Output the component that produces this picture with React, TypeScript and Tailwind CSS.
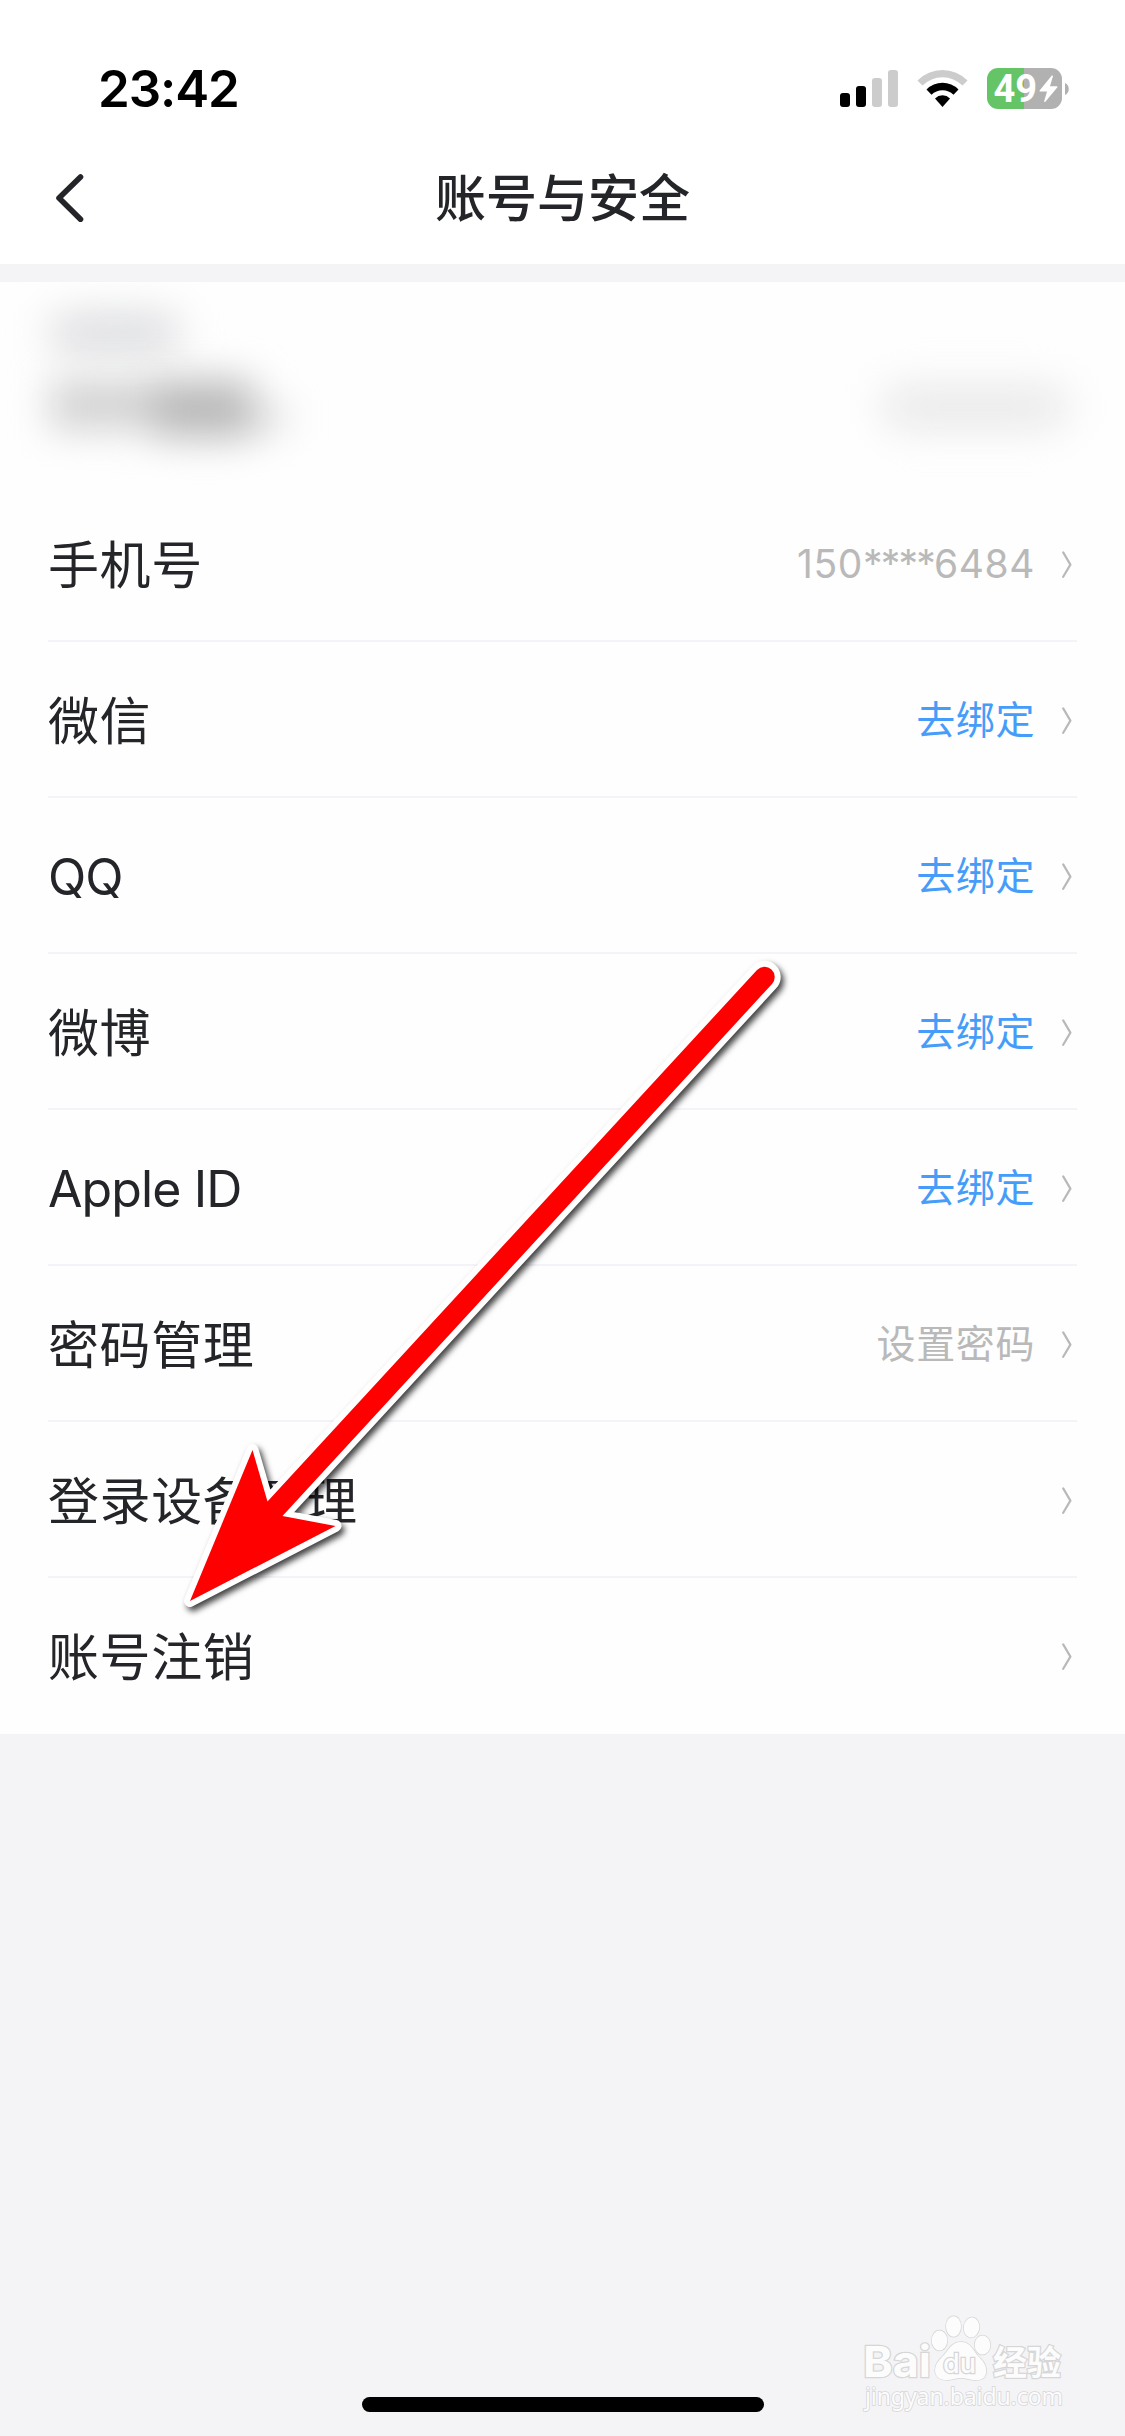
import type { ReactNode } from "react";

type Row = {
  label: string;
  value?: ReactNode;
  link?: boolean;
};

const rows: Row[] = [
  {
    label: "手机号",
    value: (
      <>
        150<span className="tracking-[-1.8px]">****</span>6484
      </>
    ),
  },
  { label: "微信", value: "去绑定", link: true },
  { label: "QQ", value: "去绑定", link: true },
  { label: "微博", value: "去绑定", link: true },
  { label: "Apple ID", value: "去绑定", link: true },
  { label: "密码管理", value: "设置密码" },
  { label: "登录设备管理" },
  { label: "账号注销" },
];

const StatusBar = () => {
  return (
    <div className="flex h-[138px] items-start justify-between pl-[98px] pr-[56px] pt-[60px]">
      <span className="font-['Inter',sans-serif] text-[51px] leading-[58px] font-semibold tracking-[-1.1px] text-black">
        23:42
      </span>
      <div className="flex pt-2">
        <svg width="58" height="41" viewBox="0 0 58 41">
          <rect x="0" y="25" width="10" height="14" rx="3" fill="#000" />
          <rect x="16" y="18" width="10" height="21" rx="3" fill="#000" />
          <rect x="32" y="10" width="10" height="29" rx="3" fill="#ccc" />
          <rect x="48" y="2" width="10" height="37" rx="3" fill="#ccc" />
        </svg>
        <svg className="ml-[19px]" width="51" height="41" viewBox="0 0 51 41">
          <path d="M0.5 12.5a35.3 35.3 0 0 1 50 0L45.5 17.6a28.3 28.3 0 0 0-40 0z" fill="#ccc" />
          <path d="M9.5 21.5a22.6 22.6 0 0 1 32 0L36.5 26.8a15.6 15.6 0 0 0-22 0z" fill="#000" />
          <path d="M18 30.4a10.7 10.7 0 0 1 15 0L25.5 39z" fill="#000" />
        </svg>
        <div className="ml-[19px] flex items-center">
          <div className="flex h-[41px] w-[75px] items-center rounded-[11px] bg-[linear-gradient(to_right,#65c466_37px,#b1b1b1_37px)] pl-[6.5px]">
            <span className="w-[45px] font-['Roboto',sans-serif] text-[38px] leading-[40px] font-bold text-white">
              49
            </span>
            <svg width="19" height="28" viewBox="0 0 19 28">
              <path
                d="M12.8 0.6 0.8 15.2q-.9 1.3.6 1.3H8L5.2 26q-.2 1.6 1.2.7L18.2 12.6q.9-1.3-.6-1.3H11L13.9 1.5q.1-1.4-1.1-.9z"
                fill="#fff"
              />
            </svg>
          </div>
          <svg className="ml-[3px]" width="4" height="12" viewBox="0 0 4 12">
            <path d="M0 0c5 1.8 5 10.2 0 12z" fill="#b1b1b1" />
          </svg>
        </div>
      </div>
    </div>
  );
};

const Header = () => {
  return (
    <div className="grid h-[126px] grid-cols-3 items-start px-[56px]">
      <svg className="mt-9" width="28" height="48" viewBox="0 0 28 48" fill="none">
        <path d="M24.5 3 3 24l21.5 21.3" stroke="#242529" strokeWidth="5.6" strokeLinecap="round" strokeLinejoin="round" />
      </svg>
      <h1 className="mt-[25px] text-center text-[51px] leading-[72px] font-medium whitespace-nowrap">账号与安全</h1>
    </div>
  );
};

// name and account are hidden behind a blur
const Account = () => {
  return (
    <div className="flex h-[204px] items-start justify-between overflow-hidden pl-[50px] pr-[56px] pt-[34px]">
      <div>
        <div className="h-[34px] w-[130px] rounded-full bg-[#d6d7da] blur-[20px]"></div>
        <div className="mt-[22px] flex items-center blur-[19px]">
          <div className="h-[50px] w-[104px] bg-[#d2d2d2]"></div>
          <div className="mt-2 h-[58px] w-[98px] bg-[#b9b9b9]"></div>
          <div className="mt-6 h-[24px] w-[34px] bg-[#dadada]"></div>
        </div>
      </div>
      <div className="mt-[70px] h-[42px] w-[188px] rounded-full bg-[#e8e8e8] blur-[20px]"></div>
    </div>
  );
};

const ListRow = ({ label, value, link }: Row) => {
  const latin = /^[A-Za-z ]+$/.test(label);

  return (
    <div className="mx-12 flex h-[156px] items-center justify-between border-b-2 border-[#f3f3f8] pt-[3px] last:border-[#fefefe]">
      <span className={latin ? "text-[50px] leading-[72px] tracking-[-0.9px]" : "pt-[3px] text-[51px] leading-[72px] tracking-[0.6px]"}>
        {label}
      </span>
      <div className="flex items-center pr-[5px]">
        {value && (
          <span className={link ? "text-[39px] tracking-[0.6px] text-[#459df9]" : "text-[39px] tracking-[0.6px] text-[#b9b9b9]"}>
            {value}
          </span>
        )}
        <svg className="ml-[27px]" width="10" height="28" viewBox="0 0 10 28" fill="none">
          <path d="M1.2 1.4 8.4 13.6 1.2 25.8" stroke="#b9b9b9" strokeWidth="2.2" strokeLinecap="round" strokeLinejoin="round" />
        </svg>
      </div>
    </div>
  );
};

const Arrow = () => {
  return (
    <svg className="pointer-events-none absolute left-0 top-0" width="1125" height="2436" viewBox="0 0 1125 2436">
      <path
        d="M190 1601 252.500 1450 267.500 1501.500 757 970A10.200 10.200 0 0 1 772 984L282.500 1516 335.500 1526Z"
        fill="#f00"
        stroke="#fff"
        strokeWidth="12"
        strokeLinejoin="round"
        paintOrder="stroke"
        className="drop-shadow-[3px_4px_3px_rgba(0,0,0,0.75)]"
      />
    </svg>
  );
};

const Watermark = () => {
  return (
    <svg
      className="absolute left-[855px] top-[2308px]"
      width="220"
      height="110"
      viewBox="0 0 220 110"
      fill="#fcfcfc"
      stroke="#d6d6d7"
      strokeWidth="2.5"
      paintOrder="stroke"
    >
      <text x="8" y="69" fontFamily="Inter, sans-serif" fontSize="43" fontWeight="700" textLength="68" lengthAdjust="spacingAndGlyphs">Bai</text>
      <g strokeWidth="1.500">
        <ellipse cx="84.500" cy="32.500" rx="7.800" ry="10" />
        <ellipse cx="98.500" cy="18.500" rx="7.500" ry="10.300" />
        <ellipse cx="116.500" cy="19.500" rx="7.800" ry="10" transform="rotate(8 116.500 19.500)" />
        <ellipse cx="127.500" cy="37" rx="7.800" ry="9.500" />
        <path d="M106 34c9 0 12 8 17 14 5 5 9 9 8 17-1 7-7 7-11 7-5 0-9-2-14-2s-9 2-14 2-11-1-12-9c0-7 4-11 9-16 5-6 8-13 17-13z" />
      </g>
      <text x="88" y="65" fontFamily="Inter, sans-serif" fontSize="27" fontWeight="500" textLength="33" strokeWidth="2.500">du</text>
      <text x="138" y="67" fontFamily="Noto Sans CJK SC, sans-serif" fontSize="34" fontWeight="700" textLength="68">经验</text>
      <text x="10" y="97" fontFamily="Noto Sans, sans-serif" fontSize="23" textLength="198" strokeWidth="1.600">jingyan.baidu.com</text>
    </svg>
  );
};

const App = () => {
  return (
    <div className="relative flex h-[2436px] w-[1125px] flex-col overflow-hidden bg-[#f4f4f7] font-['Inter','Noto_Sans_CJK_SC',sans-serif] text-[#242529]">
      <div className="bg-white">
        <StatusBar />
        <Header />
      </div>
      <div className="mt-[18px] bg-[#fefefe]">
        <Account />
        <div>
          {rows.map((row) => (
            <ListRow key={row.label} {...row} />
          ))}
        </div>
      </div>
      <div className="mx-auto mt-auto mb-6 h-[15px] w-[402px] rounded-full bg-black"></div>
      <Watermark />
      <Arrow />
    </div>
  );
};

export default App;
